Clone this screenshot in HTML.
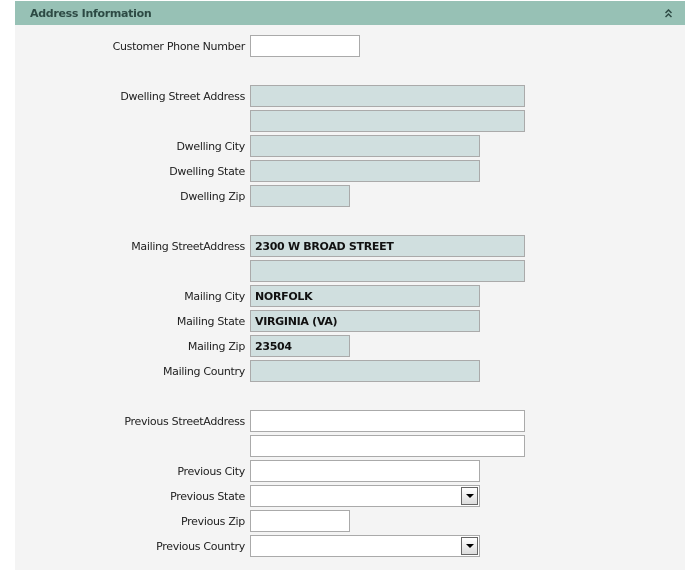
<!DOCTYPE html>
<html><head><style>
body{margin:0;width:692px;height:585px;background:#fff;font-family:"DejaVu Sans","Liberation Sans",sans-serif;font-size:11px;position:relative;overflow:hidden}
.panel{position:absolute;left:15px;top:1px;width:670px;height:569px;background:#f4f4f4}
.hdr{position:absolute;left:15px;top:1px;width:670px;height:24px;background:#97c1b5}
.hdr span{position:absolute;left:15px;top:6px;font-weight:bold;color:#2d4a44;font-size:11px;letter-spacing:-0.3px}
.hdr svg{position:absolute;right:13px;top:8px}
.l{position:absolute;right:447px;color:#222;white-space:nowrap;letter-spacing:-0.3px}
.f{position:absolute;left:250px;height:20px;border:1px solid #aaa;box-sizing:content-box;background:#fff;font-weight:bold;line-height:22px;padding-left:4px;color:#111;letter-spacing:-0.3px}
.g{background:#d0dfdf}
.L{width:269px}.M{width:224px}.S{width:94px}.P{width:104px}
.dd{position:absolute;right:1px;top:1px;width:15px;height:16px;border:1px solid #666;background:linear-gradient(#fff,#ddd)}
.dd:after{content:"";position:absolute;left:4px;top:6px;border-left:4px solid transparent;border-right:4px solid transparent;border-top:4px solid #000}
</style></head><body>
<div class="panel"></div>
<div class="hdr"><span>Address Information</span><svg width="7" height="9" viewBox="0 0 7 9"><path d="M0.5 4 L3.5 1 L6.5 4 M0.5 8 L3.5 5 L6.5 8" stroke="#2d4a44" stroke-width="1.5" fill="none"/></svg></div>

<div class="l" style="top:40px">Customer Phone Number</div><div class="f P" style="top:35px"></div>

<div class="l" style="top:90px">Dwelling Street Address</div><div class="f g L" style="top:85px"></div>
<div class="f g L" style="top:110px"></div>
<div class="l" style="top:140px">Dwelling City</div><div class="f g M" style="top:135px"></div>
<div class="l" style="top:165px">Dwelling State</div><div class="f g M" style="top:160px"></div>
<div class="l" style="top:190px">Dwelling Zip</div><div class="f g S" style="top:185px"></div>

<div class="l" style="top:240px">Mailing StreetAddress</div><div class="f g L" style="top:235px">2300 W BROAD STREET</div>
<div class="f g L" style="top:260px"></div>
<div class="l" style="top:290px">Mailing City</div><div class="f g M" style="top:285px">NORFOLK</div>
<div class="l" style="top:315px">Mailing State</div><div class="f g M" style="top:310px">VIRGINIA (VA)</div>
<div class="l" style="top:340px">Mailing Zip</div><div class="f g S" style="top:335px">23504</div>
<div class="l" style="top:365px">Mailing Country</div><div class="f g M" style="top:360px"></div>

<div class="l" style="top:415px">Previous StreetAddress</div><div class="f L" style="top:410px"></div>
<div class="f L" style="top:435px"></div>
<div class="l" style="top:465px">Previous City</div><div class="f M" style="top:460px"></div>
<div class="l" style="top:490px">Previous State</div><div class="f M" style="top:485px"><div class="dd"></div></div>
<div class="l" style="top:515px">Previous Zip</div><div class="f S" style="top:510px"></div>
<div class="l" style="top:540px">Previous Country</div><div class="f M" style="top:535px"><div class="dd"></div></div>
</body></html>
